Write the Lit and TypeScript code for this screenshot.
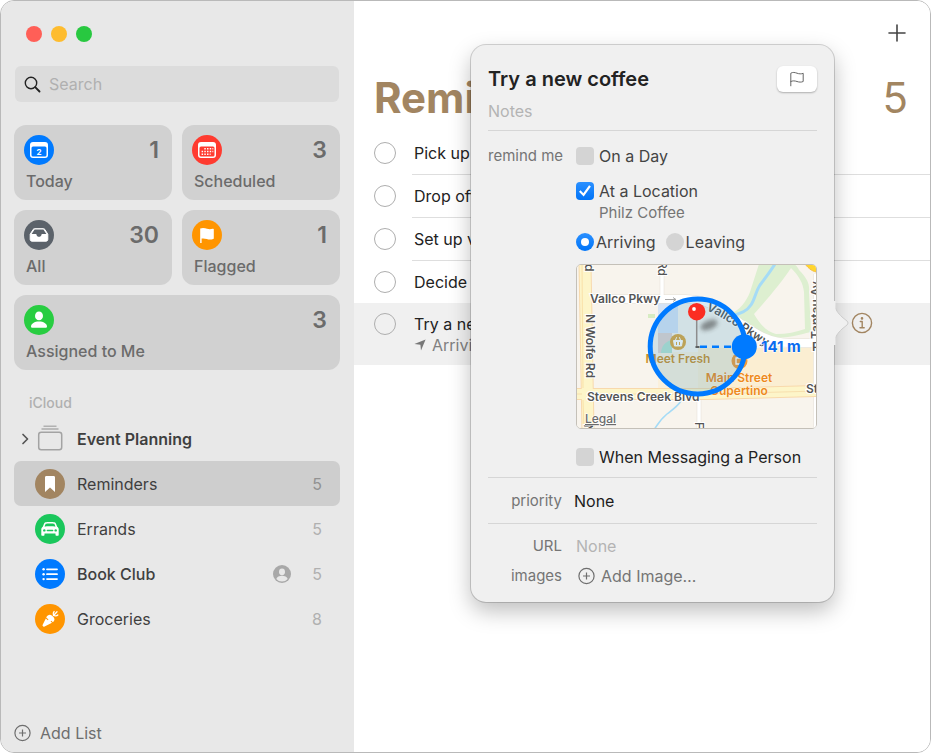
import { LitElement, html, svg, css, TemplateResult } from "lit";
import { customElement } from "lit/decorators.js";
import { classMap } from "lit/directives/class-map.js";

const sharedStyles = css`
  :host {
    box-sizing: border-box;
    font-family: Inter, "Liberation Sans", sans-serif;
    font-size: 16px;
    line-height: 20px;
  }
  *,
  *::before,
  *::after {
    box-sizing: border-box;
  }
  button,
  input,
  select {
    margin: 0;
    padding: 0;
    border: 0;
    background: none;
    color: inherit;
    font: inherit;
    text-align: left;
  }
  svg {
    display: block;
    flex: none;
  }
`;

const icons: Record<string, TemplateResult> = {
  today: svg`
    <circle cx="15" cy="15" r="15" fill="#007aff"/>
    <path d="M9 7h12a3 3 0 0 1 3 3v10a3 3 0 0 1-3 3H9a3 3 0 0 1-3-3V10a3 3 0 0 1 3-3z" fill="#fff"/>
    <rect x="7.500" y="11.500" width="15" height="10" rx="1.500" fill="#007aff"/>
    <text x="15" y="19.500" font-size="8" font-weight="700" text-anchor="middle" fill="#fff">2</text>`,
  scheduled: svg`
    <circle cx="15" cy="15" r="15" fill="#ff3b30"/>
    <path d="M9 7h12a3 3 0 0 1 3 3v10a3 3 0 0 1-3 3H9a3 3 0 0 1-3-3V10a3 3 0 0 1 3-3z" fill="#fff"/>
    <rect x="7.500" y="11.500" width="15" height="10" rx="1.500" fill="#ff3b30"/>
    <path d="M12.300 13.700h9M9.600 16.500h11.700M9.600 19.300h9" stroke="#fff" stroke-width="1.500" stroke-dasharray="1.500 1.200"/>`,
  all: svg`
    <circle cx="15" cy="15" r="15" fill="#5b626a"/>
    <path d="M10.500 8.700h9c.6 0 1 .2 1.300.7l3 4.800v5.300c0 1-.7 1.700-1.700 1.700H7.900c-1 0-1.700-.7-1.700-1.700v-5.300l3-4.800c.3-.5.700-.7 1.300-.7z" fill="#fff" stroke="#fff"/>
    <path d="M10.600 9.400h8.800l3 4.600h-4.300c-.5 0-.6.4-.7.900-.2 1-1.100 1.900-2.400 1.900s-2.200-.9-2.400-1.900c-.1-.5-.2-.9-.7-.9H7.600z" fill="#5b626a"/>`,
  flagged: svg`
    <circle cx="15" cy="15" r="15" fill="#ff9500"/>
    <path d="M8.200 8.600c2.800-1.300 5-.3 6.800.2 2.200.6 3.800.5 5.800-.1.600-.2 1 0 1 .6v8.900c0 .4-.2.700-.6.800-2.200.8-4.200.8-6.400.1-1.800-.5-3.300-1-5.200-.5V23h-1.400z" fill="#fff"/>`,
  assigned: svg`
    <circle cx="15" cy="15" r="15" fill="#28cd41"/>
    <ellipse cx="15" cy="10.900" rx="4" ry="4.300" fill="#fff"/>
    <path d="M7 21.500c0-2.900 3.500-5 8-5s8 2.100 8 5c0 1-.6 1.300-1.500 1.300h-13C7.600 22.800 7 22.500 7 21.500z" fill="#fff"/>`,
  bookmark: svg`
    <circle cx="15" cy="15" r="15" fill="#a28561"/>
    <path d="M11.500 7h7c1 0 1.500.5 1.500 1.500V23l-5-4.400L10 23V8.500C10 7.500 10.500 7 11.500 7z" fill="#fff"/>`,
  car: svg`
    <circle cx="15" cy="15" r="15" fill="#1ac75c"/>
    <path d="M10.400 8.300c1.500-.5 7.700-.5 9.200 0 .7.200 1 .6 1.300 1.300l1.300 3.200c1 .7 1.500 1.500 1.500 2.700v5.200c0 .6-.4 1-1 1h-1.200c-.6 0-1-.4-1-1v-1.100h-11v1.100c0 .6-.4 1-1 1H7.300c-.6 0-1-.4-1-1v-5.200c0-1.200.5-2 1.500-2.700l1.300-3.200c.3-.7.600-1.100 1.300-1.300z" fill="#fff"/>
    <path d="M10.700 9.800c1.300-.4 7.300-.4 8.600 0l1.200 2.700c-2.300-.3-8.700-.3-11 0z" fill="#1ac75c"/>
    <circle cx="9.300" cy="16.400" r="1.200" fill="#1ac75c"/><circle cx="20.700" cy="16.400" r="1.200" fill="#1ac75c"/>
    <path d="M12.400 16.600h5.200" stroke="#1ac75c" stroke-width="1.500" stroke-linecap="round"/>`,
  bullets: svg`
    <circle cx="15" cy="15" r="15" fill="#007aff"/>
    <path d="M12 10.300h10M12 15.200h10M12 20.100h10" stroke="#fff" stroke-width="1.800" stroke-linecap="round"/>
    <g fill="#fff"><circle cx="8.600" cy="10.300" r="1.200"/><circle cx="8.600" cy="15.200" r="1.200"/><circle cx="8.600" cy="20.100" r="1.200"/></g>`,
  carrot: svg`
    <circle cx="15" cy="15" r="15" fill="#ff9500"/>
    <path d="M7.800 22c-.4-.3-.3-.9 0-1.600l3-6 2 1.800.7-.7-2.300-2.100c1.400-2.600 3.800-3.300 5.900-1.700l1.400 1.400c1.500 1.900 1.300 3.900-.6 5.100l-1.600-1.500-.7.700 1.400 1.400-7.400 3.600c-.7.400-1.400.4-1.800-.4z" fill="#fff"/>
    <path d="M18.500 11.500c-.6-1.900-.2-3.100.6-4M19 11l3-3.300M19.500 11.600c1.500.4 2.500.2 3.300-.6" fill="none" stroke="#fff" stroke-width="1.300" stroke-linecap="round"/>`,
};

const roundIcon = (name: string) =>
  html`<svg width="30" height="30" viewBox="0 0 30 30" aria-hidden="true">${icons[name]}</svg>`;

const plusCircle = html`<svg width="18" height="18" viewBox="0 0 18 18" fill="none" stroke="#6e6e6e" stroke-width="1.200" aria-hidden="true">
  <circle cx="8.500" cy="9" r="7.600"/><path d="M5 9h7M8.500 5.500v7"/>
</svg>`;

@customElement("reminders-sidebar")
class RemindersSidebar extends LitElement {
  static styles = [
    sharedStyles,
    css`
      :host {
        display: flex;
        flex-direction: column;
        width: 353px;
        flex: none;
        padding: 25px 14px 9px 13px;
        background: #e8e8e8;
        color: #3f3f3f;
      }
      .lights {
        display: flex;
        gap: 9px;
        padding-left: 12px;
      }
      .light {
        width: 16px;
        height: 16px;
        border-radius: 50%;
      }
      .close { background: #ff5f57; }
      .minimise { background: #febc2e; }
      .zoom { background: #28c840; }
      .search {
        display: flex;
        align-items: center;
        gap: 8px;
        height: 36px;
        margin: 24px 1px 0;
        padding: 0 9px;
        border-radius: 6px;
        background: #dcdcdc;
      }
      .search input {
        flex: 1;
        min-width: 0;
        outline: 0;
        appearance: none;
      }
      .search input::placeholder {
        color: #b0b0b0;
        opacity: 1;
      }
      .cards {
        display: grid;
        grid-template-columns: 1fr 1fr;
        gap: 10px;
        margin-top: 23px;
      }
      .card {
        display: grid;
        grid-template-columns: 30px 1fr;
        grid-template-rows: 30px 20px;
        row-gap: 6px;
        height: 75px;
        padding: 10px 13px 9px 10px;
        border-radius: 12px;
        background: #d1d1d1;
        color: #6b6b6b;
        font-weight: 500;
      }
      .card.wide {
        grid-column: 1 / -1;
      }
      .card .total {
        text-align: right;
        font-size: 23px;
        line-height: 30px;
        font-weight: 600;
      }
      .card .label {
        grid-column: 1 / -1;
        padding-left: 2px;
      }
      h2 {
        margin: 23px 0 3px 15px;
        font-size: 14px;
        font-weight: 500;
        color: #b0b0b0;
      }
      .lists {
        margin: 0;
        padding: 0;
        list-style: none;
      }
      .row {
        display: flex;
        align-items: center;
        width: 100%;
        height: 45px;
        padding: 0 18px 0 21px;
        border-radius: 7px;
      }
      .row.selected {
        background: #cecece;
      }
      .row.group {
        padding-left: 6px;
        font-weight: 600;
      }
      .row .name {
        flex: 1;
        margin-left: 12px;
      }
      .row .count {
        width: 31px;
        text-align: right;
        color: #b0b0b0;
      }
      .row.selected .count {
        color: #929292;
      }
      .row.shared .name {
        font-weight: 500;
      }
      .chevron {
        margin-right: 7px;
      }
      .add {
        display: flex;
        align-items: center;
        gap: 8px;
        margin-top: auto;
        align-self: flex-start;
        color: #6e6e6e;
      }
    `,
  ];

  private card(icon: string, label: string, total: number, wide = false) {
    return html`<button class=${classMap({ card: true, wide })}>
      ${roundIcon(icon)}
      <span class="total">${total}</span>
      <span class="label">${label}</span>
    </button>`;
  }

  private list(icon: string, name: string, count: number, extra = {}, shared = false) {
    return html`<li>
      <button class=${classMap({ row: true, shared, ...extra })}>
        ${roundIcon(icon)}
        <span class="name">${name}</span>
        ${shared
          ? html`<svg width="18" height="18" viewBox="0 0 18 18" aria-hidden="true">
              <circle cx="9" cy="9" r="9" fill="#a8a8a8"/>
              <ellipse cx="9" cy="6.800" rx="3" ry="3.400" fill="#e8e8e8"/>
              <path d="M3.300 13.900c.7-2 3-3.200 5.700-3.200s5 1.200 5.700 3.200A7.600 7.600 0 0 1 9 16.600a7.600 7.600 0 0 1-5.700-2.700z" fill="#e8e8e8"/>
            </svg>`
          : ""}
        <span class="count">${count}</span>
      </button>
    </li>`;
  }

  render() {
    return html`
      <div class="lights">
        <button class="light close" aria-label="Close"></button>
        <button class="light minimise" aria-label="Minimise"></button>
        <button class="light zoom" aria-label="Zoom"></button>
      </div>
      <label class="search">
        <svg width="17" height="17" viewBox="0 0 17 17" fill="none" stroke="#222" stroke-linecap="round" aria-hidden="true">
          <circle cx="7" cy="7" r="5.700" stroke-width="1.400"/>
          <path d="M11.200 11.200l4.300 4.300" stroke-width="1.900"/>
        </svg>
        <input type="search" placeholder="Search" aria-label="Search" />
      </label>
      <div class="cards">
        ${this.card("today", "Today", 1)} ${this.card("scheduled", "Scheduled", 3)}
        ${this.card("all", "All", 30)} ${this.card("flagged", "Flagged", 1)}
        ${this.card("assigned", "Assigned to Me", 3, true)}
      </div>
      <h2>iCloud</h2>
      <ul class="lists">
        <li>
          <button class="row group">
            <svg class="chevron" width="10" height="12" viewBox="0 0 10 12" fill="none" stroke="#555" stroke-width="1.700" stroke-linecap="round" stroke-linejoin="round" aria-hidden="true">
              <path d="M3 1.500L7.500 6 3 10.500"/>
            </svg>
            <svg width="28" height="28" viewBox="1 1 28 28" fill="none" stroke="#a3a3a3" aria-hidden="true">
              <path d="M7.500 2.200h13" stroke-width="1.200"/>
              <path d="M5.500 5h17" stroke-width="1.300"/>
              <rect x="2.700" y="8.200" width="23" height="17.600" rx="2.500" stroke-width="1.500"/>
            </svg>
            <span class="name">Event Planning</span>
          </button>
        </li>
        ${this.list("bookmark", "Reminders", 5, { selected: true })}
        ${this.list("car", "Errands", 5)}
        ${this.list("bullets", "Book Club", 5, {}, true)}
        ${this.list("carrot", "Groceries", 8)}
      </ul>
      <button class="add">${plusCircle} Add List</button>
    `;
  }
}

@customElement("location-map")
class LocationMap extends LitElement {
  static styles = [
    sharedStyles,
    css`
      :host {
        display: block;
        overflow: hidden;
        height: 165px;
        border: 1px solid #c4c0b8;
        border-radius: 5px;
      }
      .road {
        font-size: 12px;
        font-weight: 600;
        fill: #555;
        stroke: #fff;
        stroke-width: 2px;
        paint-order: stroke;
      }
      .minor {
        font-weight: 500;
      }
      .place {
        font-size: 12px;
        font-weight: 600;
        stroke: #fdf6e6;
        stroke-width: 1px;
        paint-order: stroke;
      }
      .gold { fill: #cb8f2a; }
      .orange { fill: #ee8a1c; }
      .distance {
        font-size: 15px;
        font-weight: 700;
        fill: #0a6cf0;
        stroke: #fff;
        stroke-width: 1px;
        paint-order: stroke;
      }
      .legal {
        font-size: 12px;
        font-weight: 500;
        fill: #6b6b6b;
        text-decoration: underline;
        stroke: #fff;
        stroke-width: 1px;
        paint-order: stroke;
      }
    `,
  ];

  render() {
    return html`<svg width="100%" height="165" viewBox="0 1 240 165" preserveAspectRatio="xMinYMin slice" role="img" aria-label="Map">
      <defs>
        <filter id="soft" x="-50%" y="-50%" width="200%" height="200%"><feGaussianBlur stdDeviation="2.200"/></filter>
      </defs>
      <rect width="242" height="166" fill="#f8f4ed"/>
      <rect x="81" y="88" width="60" height="36" fill="#faf0dc"/>
      <path d="M121 84h117v40H121z" fill="#fbeed2"/>
      <path d="M81 33h20v36H81z" fill="#d5e3f5"/>
      <path d="M81 69h14v20H81z" fill="#e2d3cf"/>
      <path d="M84 89c0-7 5-12 11-13v13z" fill="#b4e2cf"/>
      <path d="M71 50h7v4h-7z" fill="#d7ecc2"/>

      <path d="M182 0h33c3 0 5 2 7 6 8 8 11 14 10 22l2 40c-12 3-24 6-38 6-12-3-28-12-43-24 10-4 16-12 20-22z" fill="#ddefd0"/>
      <path d="M214 4c-9 14-26 34-37 46 6 11 14 18 22 20 11 0 20-2 29-5l-1-37c-1-9-5-16-13-24z" fill="#f8f4ed"/>
      <path d="M198 0c-5 8-9 13-15 21-6 9-5 21-17 27l-10 4" fill="none" stroke="#a5dbf6" stroke-width="3"/>
      <path d="M104 137c-4 6-9 9-14 13-6 5-9 9-13 16" fill="none" stroke="#a5dbf6" stroke-width="1.600"/>
      <path d="M228 0h13v8c-5 0-9-3-13-8z" fill="#ffd52e" stroke="#f5bd3c"/>

      <g fill="none" stroke="#e4dfd6">
        <path d="M10 35h98c25 0 38 12 55 24 18 12 30 20 50 20h28" stroke-width="9"/>
        <path d="M85 0v32M122 134v32M238.500 10v156" stroke-width="4.500"/>
      </g>
      <g fill="none" stroke="#fff">
        <path d="M10 35h98c25 0 38 12 55 24 18 12 30 20 50 20h28" stroke-width="8"/>
        <path d="M85 0v32M122 134v32M238.500 10v156" stroke-width="3.500"/>
      </g>
      <path d="M0 130H130L242 127" stroke="#f8d9ac" stroke-width="12" fill="none"/>
      <path d="M8 0l3 166" stroke="#f8d9ac" stroke-width="13"/>
      <path d="M0 130H130L242 127" stroke="#fdf5c9" stroke-width="10" fill="none"/>
      <path d="M8 0l3 166" stroke="#fdf5c9" stroke-width="11"/>
      <path d="M0 130h5M17 130h113l112-3" stroke="#f7dfae" fill="none"/>
      <path d="M5 0l1 124M6 136l1 30" stroke="#f9e0a8"/>

      <text class="road" x="13" y="39">Vallco Pkwy</text>
      <path d="M88 35.500h11m-3-2l3 2-3 2" fill="none" stroke="#a8a8a8"/>
      <text class="road" transform="translate(9 50) rotate(90)">N Wolfe Rd</text>
      <text class="road" transform="translate(8 0) rotate(90)">d</text>
      <text class="road" transform="translate(7 160) rotate(90)">N</text>
      <text class="road minor" transform="translate(81 -3) rotate(90)">Rd</text>
      <text class="road minor" transform="translate(118 158) rotate(90)">F</text>
      <text class="road" x="10" y="137">Stevens Creek Blvd</text>
      <text class="road" x="229" y="129">St</text>
      <text class="road" x="235" y="87">R</text>
      <text class="road" transform="translate(243 75) rotate(-90)">Tantau Av</text>
      <path id="curve" d="M129 46C150 55 166 68 188 82" fill="none"/>
      <text class="road"><textPath href="#curve">Vallco Pkwy</textPath></text>

      <circle cx="101" cy="78" r="8" fill="#dda63c"/>
      <path d="M96.500 76.500h9l-1 5.500h-7zM98.500 76l1.200-2.800M103.500 76l-1.200-2.800" fill="#fff" stroke="#fff" stroke-linejoin="round"/>
      <path d="M99.500 78v3M102.500 78v3" stroke="#dda63c"/>
      <circle cx="162.500" cy="97" r="8" fill="#f29a36"/>
      <path d="M159 94h7v6h-7zM160.500 94v-1.500h4V94" fill="none" stroke="#fff" stroke-width="1.300"/>
      <text class="place gold" x="101" y="99" text-anchor="middle">Meet Fresh</text>
      <text class="place orange" x="162" y="118" text-anchor="middle">Main Street</text>
      <text class="place orange" x="162" y="131" text-anchor="middle">Cupertino</text>

      <circle cx="120.700" cy="82.500" r="47.500" fill="#3c96c8" fill-opacity=".2" stroke="#007aff" stroke-width="5"/>
      <ellipse cx="132" cy="61" rx="9" ry="4.500" transform="rotate(-22 132 61)" fill="#333" fill-opacity=".5" filter="url(#soft)"/>
      <path d="M119.700 50v32" stroke="#8d8d8d" stroke-width="1.500"/>
      <path d="M118.500 83h4" stroke="#333" stroke-width="1.500"/>
      <circle cx="119.700" cy="47.700" r="8.700" fill="#fb2d22"/>
      <circle cx="117" cy="45" r="1.900" fill="#fff"/>
      <path d="M123 82.700h36" stroke="#007aff" stroke-width="2.600" stroke-dasharray="7 5"/>
      <text class="distance" x="184" y="88">141 m</text>
      <circle cx="167.300" cy="82.700" r="12.500" fill="#007aff"/>
      <text class="legal" x="8" y="159">Legal</text>
    </svg>`;
  }
}

@customElement("reminder-popover")
class ReminderPopover extends LitElement {
  static styles = [
    sharedStyles,
    css`
      :host {
        display: block;
        padding: 21px 17px 16px;
        border-radius: 15px;
        background: #f0f0f0;
        color: #444;
        box-shadow: 0 0 0 1px rgba(0, 0, 0, 0.16), 0 9px 22px rgba(0, 0, 0, 0.26);
      }
      .arrow {
        position: absolute;
        left: 100%;
        top: 256px;
      }
      header {
        display: flex;
        align-items: center;
        gap: 12px;
      }
      .title {
        flex: 1;
        min-width: 0;
        height: 26px;
        font-size: 20px;
        font-weight: 600;
        color: #222;
      }
      .flag {
        display: grid;
        place-items: center;
        width: 40px;
        height: 26px;
        border-radius: 6px;
        background: #fff;
        box-shadow: 0 1px 2px rgba(0, 0, 0, 0.28);
      }
      .notes {
        display: block;
        width: 100%;
        height: 22px;
        margin-top: 8px;
      }
      input::placeholder {
        color: #b4b4b4;
        opacity: 1;
      }
      hr {
        height: 1px;
        margin: 8px 0 15px;
        border: 0;
        background: #d6d6d6;
      }
      .field {
        display: grid;
        grid-template-columns: 74px 1fr;
        column-gap: 14px;
        align-items: center;
      }
      .field.top {
        align-items: start;
      }
      .caption {
        text-align: right;
        font-size: 15px;
        color: #757575;
        white-space: nowrap;
      }
      .choice {
        display: flex;
        align-items: center;
        gap: 5px;
      }
      .choice input {
        display: grid;
        place-items: center;
        width: 18px;
        height: 18px;
        appearance: none;
        border-radius: 4px;
        background: #d4d4d4;
      }
      .choice input[type="radio"] {
        border-radius: 50%;
      }
      .choice input:checked {
        background: linear-gradient(#2b90ff, #0074f8);
      }
      .choice input[type="checkbox"]:checked::before {
        content: "";
        width: 12px;
        height: 12px;
        background: #fff;
        clip-path: polygon(0 56%, 13% 44%, 36% 68%, 84% 2%, 99% 12%, 39% 96%);
      }
      .choice input[type="radio"]:checked::before {
        content: "";
        width: 8px;
        height: 8px;
        border-radius: 50%;
        background: #fff;
      }
      .place {
        margin: 2px 0 9px 23px;
        font-size: 15px;
        color: #757575;
      }
      .day {
        margin-bottom: 15px;
      }
      .trigger {
        display: flex;
        gap: 10px;
        margin-bottom: 12px;
      }
      .trigger .choice {
        gap: 2px;
      }
      .person {
        margin-top: 18px;
        color: #222;
      }
      .priority {
        height: 20px;
        appearance: none;
        margin-left: -2px;
        color: #1c1c1c;
      }
      .middle {
        margin: 10px 0 13px;
      }
      .lower {
        margin: 12px 0;
      }
      .url {
        width: 100%;
      }
      .images {
        margin-top: 10px;
      }
      .add {
        display: flex;
        align-items: center;
        gap: 5px;
        padding-left: 2px;
        color: #757575;
      }
    `,
  ];

  render() {
    return html`
      <svg class="arrow" width="16" height="44" viewBox="0 0 16 44" aria-hidden="true">
        <path d="M0 1c1 8 4 11 8 15l5 4c1.300 1.200 1.300 2.800 0 4l-5 4c-4 4-7 7-8 15" fill="#f0f0f0" stroke="#cdcdcd"/>
        <path d="M0 0v44" stroke="#f0f0f0" stroke-width="3"/>
      </svg>
      <header>
        <input class="title" type="text" aria-label="Title" value="Try a new coffee" />
        <button class="flag" aria-label="Flag">
          <svg width="16" height="16" viewBox="0 0 16 16" fill="none" stroke="#666" stroke-linecap="round" stroke-linejoin="round">
            <path d="M1.800 14.800V2.200c2-1.200 4-.8 6.200 0s4.200.9 6.200.1v8.200c-2 .9-4 .7-6.200 0s-4.200-1-6.200 0" />
          </svg>
        </button>
      </header>
      <input class="notes" type="text" placeholder="Notes" aria-label="Notes" />
      <hr />
      <div class="field top">
        <span class="caption" id="remind">remind me</span>
        <div role="group" aria-labelledby="remind">
          <label class="choice day"><input type="checkbox" />On a Day</label>
          <label class="choice"><input type="checkbox" checked />At a Location</label>
          <div class="place">Philz Coffee</div>
          <div class="trigger">
            <label class="choice"><input type="radio" name="trigger" checked />Arriving</label>
            <label class="choice"><input type="radio" name="trigger" />Leaving</label>
          </div>
          <location-map></location-map>
          <label class="choice person"><input type="checkbox" />When Messaging a Person</label>
        </div>
      </div>
      <hr class="middle" />
      <div class="field">
        <label class="caption" for="priority">priority</label>
        <select class="priority" id="priority"><option>None</option></select>
      </div>
      <hr class="lower" />
      <div class="field">
        <label class="caption" for="url">URL</label>
        <input class="url" id="url" type="url" placeholder="None" />
      </div>
      <div class="field images">
        <span class="caption">images</span>
        <button class="add">${plusCircle} Add Image…</button>
      </div>
    `;
  }
}

@customElement("reminders-list")
class RemindersList extends LitElement {
  static styles = [
    sharedStyles,
    css`
      :host {
        display: block;
        position: relative;
        flex: 1;
        min-width: 0;
        background: #fff;
        color: #222;
      }
      .toolbar {
        display: flex;
        justify-content: flex-end;
        padding: 23px 24px 0 0;
      }
      .heading {
        display: flex;
        justify-content: space-between;
        margin: 28px 22px 0 20px;
        color: #a28561;
        font-size: 42px;
        line-height: 56px;
      }
      h1 {
        margin: 0;
        font: inherit;
        font-weight: 700;
      }
      .items {
        margin: 6px 0 0;
        padding: 0;
        list-style: none;
      }
      .item {
        display: flex;
        gap: 16px;
        padding-left: 20px;
      }
      .item input {
        width: 22px;
        height: 22px;
        margin-top: 10px;
        flex: none;
        appearance: none;
        border: 1px solid #aeaeae;
        border-radius: 50%;
      }
      .body {
        flex: 1;
        min-width: 0;
        padding: 11px 0 11px 2px;
        border-bottom: 1px solid #dedede;
      }
      .item.last .body {
        border-bottom: 0;
      }
      .item.selected {
        align-items: flex-start;
        background: #f0f0f0;
      }
      .item.selected .body {
        padding-bottom: 10px;
        border-bottom: 0;
      }
      .sub {
        display: flex;
        align-items: center;
        gap: 6px;
        margin-top: 1px;
        color: #808080;
        white-space: nowrap;
      }
      .info {
        margin: 9px 57px 0 0;
      }
      reminder-popover {
        position: absolute;
        top: 44px;
        right: 96px;
        width: 363px;
      }
    `,
  ];

  private readonly tasks = ["Pick up", "Drop off", "Set up v", "Decide"];

  render() {
    return html`
      <div class="toolbar">
        <button aria-label="New reminder">
          <svg width="18" height="18" viewBox="0 0 18 18" stroke="#444" stroke-width="1.600" stroke-linecap="round"><path d="M1 9h16M9 1v16"/></svg>
        </button>
      </div>
      <div class="heading"><h1>Reminders</h1><span>5</span></div>
      <ul class="items">
        ${this.tasks.map(
          (t, i) => html`<li class=${classMap({ item: true, last: i === this.tasks.length - 1 })}>
            <input type="checkbox" id="task-${i}" />
            <div class="body"><label for="task-${i}">${t}</label></div>
          </li>`
        )}
        <li class="item selected">
          <input type="checkbox" id="task-coffee" />
          <div class="body">
            <label for="task-coffee">Try a new coffee</label>
            <div class="sub">
              <svg width="12" height="12" viewBox="0 0 12 12" fill="#777" aria-hidden="true"><path d="M11.600.4L7 11.600 6.400 5.800.4 5z"/></svg>
              Arriving
            </div>
          </div>
          <button class="info" aria-label="Details">
            <svg width="22" height="22" viewBox="0 0 22 22" fill="none" stroke="#a28561" stroke-width="1.400" stroke-linecap="round" stroke-linejoin="round">
              <circle cx="11" cy="11" r="9.600"/>
              <path d="M9.300 9.500h1.900v6M9 15.700h4.200"/>
              <circle cx="11" cy="6.400" r=".6" fill="#a28561"/>
            </svg>
          </button>
        </li>
      </ul>
      <reminder-popover></reminder-popover>
    `;
  }
}

@customElement("app-root")
class AppRoot extends LitElement {
  static styles = [
    sharedStyles,
    css`
      :host {
        display: flex;
        min-height: 100vh;
        padding-bottom: 2px;
        background: #fff;
      }
      .window {
        display: flex;
        flex: 1;
        min-width: 0;
        overflow: hidden;
        border: 1px solid #b9b9b9;
        border-radius: 14px;
      }
    `,
  ];

  render() {
    return html`<div class="window">
      <reminders-sidebar></reminders-sidebar>
      <reminders-list></reminders-list>
    </div>`;
  }
}
